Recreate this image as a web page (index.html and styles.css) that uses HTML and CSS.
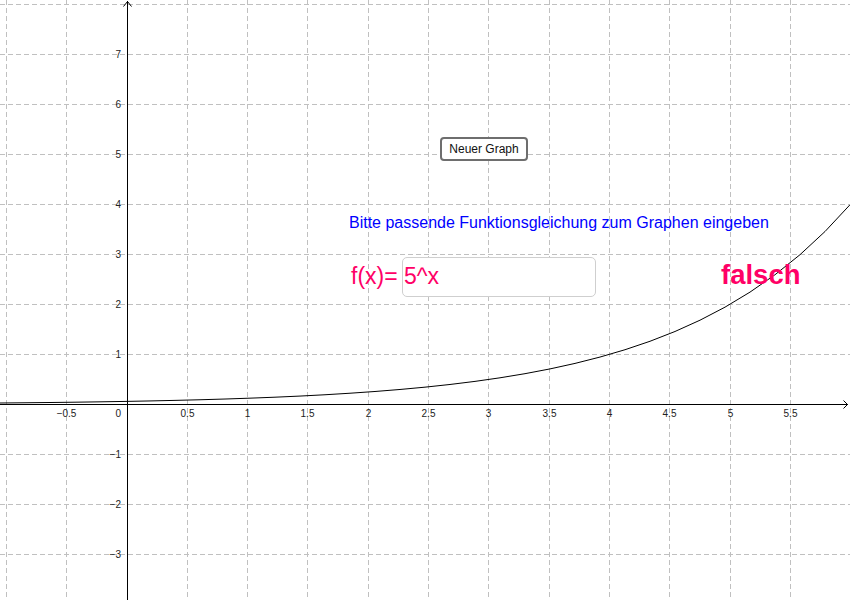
FILE: index.html
```html
<!DOCTYPE html>
<html lang="de">
<head>
<meta charset="utf-8">
<title>Funktionsgraph</title>
<link rel="stylesheet" href="styles.css">
</head>
<body>
<div class="stage">
  <svg class="plot" width="850" height="600" viewBox="0 0 850 600" xmlns="http://www.w3.org/2000/svg">
    <g class="grid">
      <line x1="6.5" y1="0" x2="6.5" y2="600"/>
      <line x1="66.5" y1="0" x2="66.5" y2="600"/>
      <line x1="187.5" y1="0" x2="187.5" y2="600"/>
      <line x1="247.5" y1="0" x2="247.5" y2="600"/>
      <line x1="307.5" y1="0" x2="307.5" y2="600"/>
      <line x1="368.5" y1="0" x2="368.5" y2="600"/>
      <line x1="428.5" y1="0" x2="428.5" y2="600"/>
      <line x1="488.5" y1="0" x2="488.5" y2="600"/>
      <line x1="549.5" y1="0" x2="549.5" y2="600"/>
      <line x1="609.5" y1="0" x2="609.5" y2="600"/>
      <line x1="669.5" y1="0" x2="669.5" y2="600"/>
      <line x1="730.5" y1="0" x2="730.5" y2="600"/>
      <line x1="790.5" y1="0" x2="790.5" y2="600"/>
      <line x1="0" y1="4.5" x2="850" y2="4.5"/>
      <line x1="0" y1="54.5" x2="850" y2="54.5"/>
      <line x1="0" y1="104.5" x2="850" y2="104.5"/>
      <line x1="0" y1="154.5" x2="850" y2="154.5"/>
      <line x1="0" y1="204.5" x2="850" y2="204.5"/>
      <line x1="0" y1="254.5" x2="850" y2="254.5"/>
      <line x1="0" y1="304.5" x2="850" y2="304.5"/>
      <line x1="0" y1="354.5" x2="850" y2="354.5"/>
      <line x1="0" y1="454.5" x2="850" y2="454.5"/>
      <line x1="0" y1="504.5" x2="850" y2="504.5"/>
      <line x1="0" y1="554.5" x2="850" y2="554.5"/>
    </g>
    <g class="axes">
      <line x1="127.5" y1="1" x2="127.5" y2="600"/>
      <line x1="0" y1="404.5" x2="848" y2="404.5"/>
      <polyline class="arrow" points="123.5,6.5 127.5,1.5 131.5,6.5"/>
      <polyline class="arrow" points="843.5,400.5 847.5,404.5 843.5,408.5"/>
    </g>
    <g class="ticks">
      <text class="yl" x="121" y="58">7</text>
      <text class="yl" x="121" y="108">6</text>
      <text class="yl" x="121" y="158">5</text>
      <text class="yl" x="121" y="208">4</text>
      <text class="yl" x="121" y="258">3</text>
      <text class="yl" x="121" y="308">2</text>
      <text class="yl" x="121" y="358">1</text>
      <text class="yl" x="121" y="458">−1</text>
      <text class="yl" x="121" y="508">−2</text>
      <text class="yl" x="121" y="558">−3</text>
      <text class="yl" x="121" y="417">0</text>
      <text class="xl" x="66.5" y="417">−0.5</text>
      <text class="xl" x="187.5" y="417">0.5</text>
      <text class="xl" x="247.5" y="417">1</text>
      <text class="xl" x="307.5" y="417">1.5</text>
      <text class="xl" x="368.5" y="417">2</text>
      <text class="xl" x="428.5" y="417">2.5</text>
      <text class="xl" x="488.5" y="417">3</text>
      <text class="xl" x="549.5" y="417">3.5</text>
      <text class="xl" x="609.5" y="417">4</text>
      <text class="xl" x="669.5" y="417">4.5</text>
      <text class="xl" x="730.5" y="417">5</text>
      <text class="xl" x="790.5" y="417">5.5</text>
    </g>
    <polyline class="curve" points="0,403.0 25,402.77 50,402.5 75,402.19 100,401.83 127,401.38 150,400.94 175,400.39 200,399.75 225,399.02 250,398.17 275,397.19 300,396.07 325,394.76 350,393.23 375,391.49 400,389.48 425,387.16 450,384.48 475,381.39 500,377.81 525,373.68 550,368.92 575,363.42 600,357.06 625,349.73 650,341.27 675,331.49 700,320.2 725,307.16 750,292.11 775,274.74 800,254.69 825,231.52 850,204.74"/>
  </svg>

  <div class="btn">Neuer Graph</div>
  <div class="prompt">Bitte passende Funktionsgleichung zum Graphen eingeben</div>
  <div class="fx">f(x)=</div>
  <div class="field">5^x</div>
  <div class="verdict">falsch</div>
</div>
</body>
</html>
```

FILE: styles.css
```css
html, body {
  margin: 0;
  padding: 0;
  background: #ffffff;
}

.stage {
  position: relative;
  width: 850px;
  height: 600px;
  overflow: hidden;
  background: #ffffff;
  font-family: "Liberation Sans", Arial, sans-serif;
}

.plot {
  display: block;
}

.grid line {
  stroke: #c0c0c0;
  stroke-width: 1;
  stroke-dasharray: 5 3;
}

.axes line,
.axes .arrow {
  stroke: #000000;
  stroke-width: 1;
  fill: none;
}

.ticks text {
  font-family: "Liberation Sans", Arial, sans-serif;
  font-size: 10px;
  fill: #222222;
}

.ticks .yl {
  text-anchor: end;
}

.ticks .xl {
  text-anchor: middle;
}

.curve {
  fill: none;
  stroke: #000000;
  stroke-width: 1;
}

.btn {
  position: absolute;
  left: 440px;
  top: 137px;
  width: 88px;
  height: 24px;
  box-sizing: border-box;
  border: 2px solid #6e6e6e;
  border-radius: 4px;
  background: #ffffff;
  font-size: 12px;
  line-height: 20px;
  text-align: center;
  color: #111111;
}

.prompt {
  position: absolute;
  left: 349px;
  top: 215px;
  font-size: 16px;
  line-height: 1;
  white-space: nowrap;
  color: #0000ff;
}

.fx {
  position: absolute;
  left: 351px;
  top: 265px;
  font-size: 23px;
  line-height: 1;
  color: #ff0066;
}

.field {
  position: absolute;
  left: 402px;
  top: 257px;
  width: 194px;
  height: 40px;
  box-sizing: border-box;
  border: 1.5px solid #cfcfcf;
  border-radius: 5px;
  background: #ffffff;
  padding-left: 1px;
  font-size: 23px;
  line-height: 37px;
  color: #ff0066;
}

.verdict {
  position: absolute;
  left: 721px;
  top: 261px;
  font-size: 27.5px;
  font-weight: bold;
  line-height: 1;
  color: #ff0066;
}
```
